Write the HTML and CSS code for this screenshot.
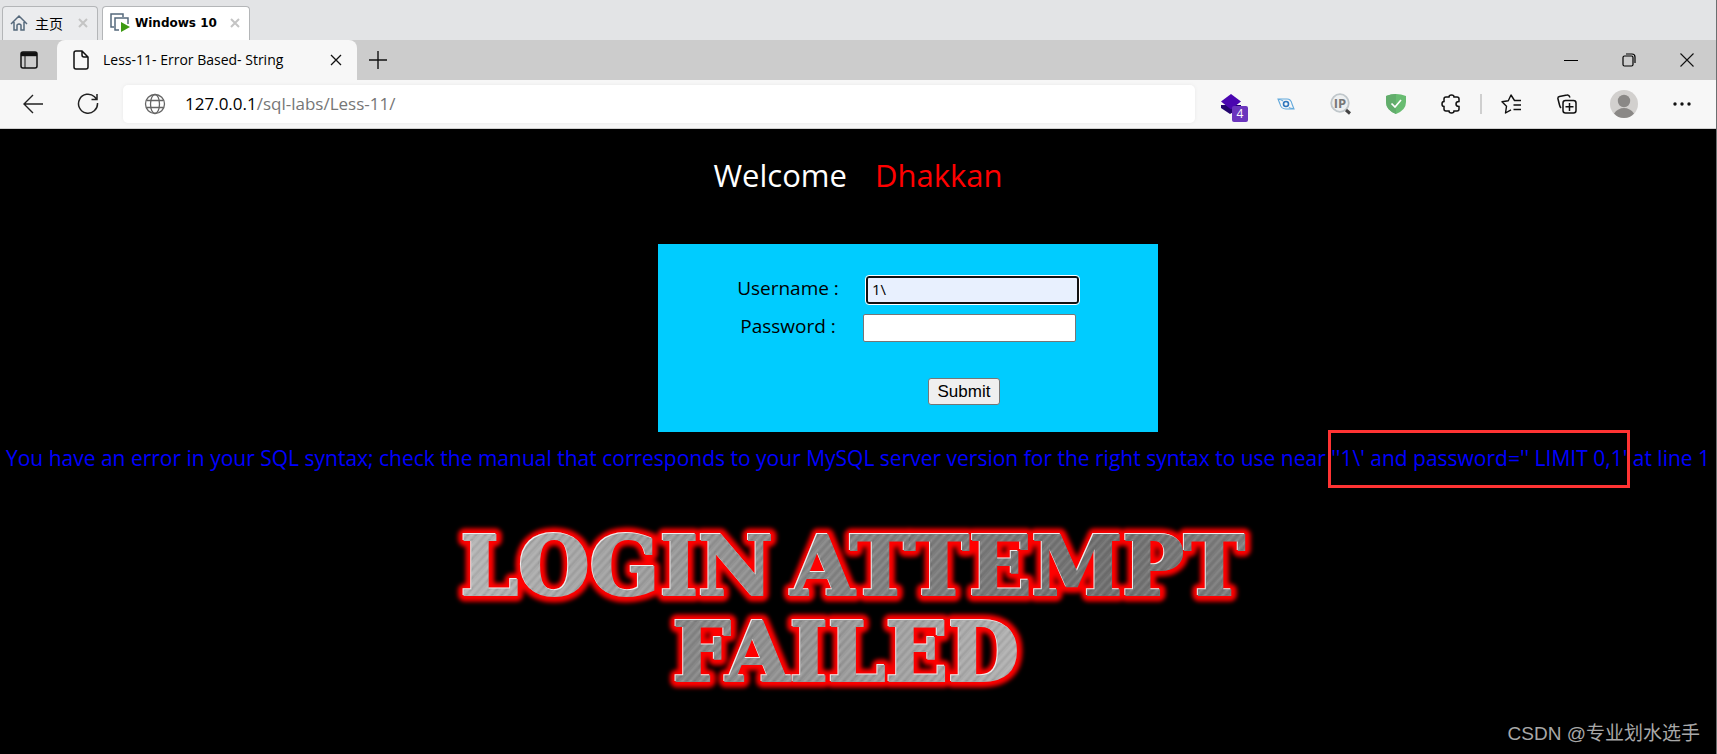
FILE: index.html
```html
<!DOCTYPE html>
<html lang="en">
<head>
  <meta charset="UTF-8" />
  <meta name="viewport" content="width=device-width, initial-scale=1.0"/>
  <title>Less-11- Error Based- String</title>
  <link rel="stylesheet" href="styles.css">
</head>
<body>

  <!-- Virtual machine tabs -->
  <div class="vm-tabs">
    <div class="vm-tab">
      <svg width="18" height="18" viewBox="0 0 18 18" fill="none" stroke="#56697c" stroke-width="1.5"><path d="M1 10 9 2l8 8M4 8v8h3v-5q2-2 4 0v5h3V8"/></svg>
      <span class="vm-name">主页</span>
      <button class="vm-close" aria-label="Close"><svg width="10" height="10" viewBox="0 0 10 10"><path d="M1 1l8 8M9 1l-8 8"/></svg></button>
    </div>
    <div class="vm-tab vm-active">
      <svg width="20" height="20" viewBox="0 0 20 20" fill="none" stroke="#56697c" stroke-width="1.5"><path d="M4 14H1V1h12v3"/><path d="M9 17H5V5h13v6"/><path d="M11 9v10l9-5z" fill="#3c9a12" stroke="none"/></svg>
      <span class="vm-name">Windows 10</span>
      <button class="vm-close" aria-label="Close"><svg width="10" height="10" viewBox="0 0 10 10"><path d="M1 1l8 8M9 1l-8 8"/></svg></button>
    </div>
  </div>

  <!-- Browser tab strip -->
  <div class="tab-strip">
    <button class="tab-menu icon-btn" aria-label="Tab actions"><svg width="18" height="18" viewBox="0 0 18 18" fill="none" stroke="#111" stroke-width="1.5"><rect x="1" y="1" width="16" height="16" rx="2"/><path d="M1 3.2h16" stroke-width="4"/><path d="M5 5v12" stroke-width="1"/></svg></button>
    <div class="tab">
      <svg width="16" height="20" viewBox="0 0 16 20" fill="none" stroke="#111" stroke-width="1.5"><path d="M3 1h6l6 6v10q0 2-2 2H3q-2 0-2-2V3q0-2 2-2zM9 1v4q0 2 2 2h4"/></svg>
      <span class="tab-title">Less-11- Error Based- String</span>
      <button class="icon-btn" aria-label="Close tab"><svg width="12" height="12" viewBox="0 0 12 12" stroke="#111" stroke-width="1.3"><path d="M1 1l10 10M11 1 1 11"/></svg></button>
    </div>
    <button class="new-tab icon-btn" aria-label="New tab"><svg width="18" height="18" viewBox="0 0 18 18" stroke="#111" stroke-width="1.4"><path d="M9 0v18M0 9h18"/></svg></button>
    <div class="window-buttons">
      <button class="icon-btn" aria-label="Minimize"><svg width="14" height="14" viewBox="0 0 14 14" stroke="#000"><path d="M0 7.500h14"/></svg></button>
      <button class="icon-btn" aria-label="Restore"><svg width="14" height="14" viewBox="0 0 14 14" fill="none" stroke="#000" stroke-width="1.2"><rect x="1" y="3" width="10" height="10" rx="1.5"/><path d="M4 1h6q3 0 3 3v6"/></svg></button>
      <button class="icon-btn" aria-label="Close"><svg width="14" height="14" viewBox="0 0 14 14" stroke="#111" stroke-width="1.1"><path d="M.5.5l13 13M13.500.5l-13 13"/></svg></button>
    </div>
  </div>

  <!-- Toolbar -->
  <div class="toolbar">
    <button class="nav icon-btn" aria-label="Back"><svg width="20" height="20" viewBox="0 0 20 20" fill="none" stroke="#222" stroke-width="1.4"><path d="M20 10H1M10 1l-9 9 9 9"/></svg></button>
    <button class="nav icon-btn" aria-label="Refresh"><svg width="22" height="22" viewBox="0 0 22 22" fill="none" stroke="#222" stroke-width="1.5"><path d="M20.500 10a9.500 9.500 0 1 1-3-6.300l2 2.300M20 1v5.500h-5.500"/></svg></button>
    <div class="address">
      <svg width="22" height="22" viewBox="0 0 22 22" fill="none" stroke="#666" stroke-width="1.3"><circle cx="11" cy="11" r="9.500"/><ellipse cx="11" cy="11" rx="4.500" ry="9.500"/><path d="M2.500 7.500h17M2.500 14.500h17"/></svg>
      <span class="url"><b>127.0.0.1</b>/sql-labs/Less-11/</span>
    </div>
    <div class="extensions">
      <button class="icon-btn ext" aria-label="Layers">
        <svg width="20" height="20" viewBox="0 0 20 20"><path d="M0 11v3l9 6 11-6v-3z" fill="#23046e"/><path d="M10 0l10 7.500-10 8L0 7.500z" fill="#4a06b0"/></svg>
        <span class="badge">4</span>
      </button>
      <button class="icon-btn ext" aria-label="Eye"><svg width="18" height="14" viewBox="0 0 18 14" fill="none" stroke="#63a9dc" stroke-width="1.1"><path d="M1 2h9q4 0 5 5l2 5H9Q4 12 3 7z"/><path d="M2 2.500q2 0 4 1.500M16 11.500q-3 0-4-1"/><circle cx="9" cy="7" r="2.500" stroke="#2e76bd" stroke-width="1.6"/></svg></button>
      <button class="icon-btn ext" aria-label="IP lookup"><svg width="22" height="22" viewBox="0 0 22 22"><circle cx="10" cy="10" r="8.800" fill="#eef0f1" stroke="#c0c7cb" stroke-width="1.8"/><path d="M16 17l4 3.500" stroke="#444" stroke-width="3"/><text x="10" y="15" text-anchor="middle" class="ip-text">IP</text></svg></button>
      <button class="icon-btn ext" aria-label="AdGuard"><svg width="20" height="20" viewBox="0 0 20 20"><path d="M10 0q5 0 10 2v6q0 8-10 12Q0 16 0 8V2q5-2 10-2z" fill="#68bc71"/><path d="M10 0v20Q0 16 0 8V2q5-2 10-2z" fill="#62ad6c"/><path d="M5.500 9.500l3.500 3.500 6-7" fill="none" stroke="#fff" stroke-width="1.7"/></svg></button>
      <button class="icon-btn ext" aria-label="Extensions"><svg width="20" height="20" viewBox="0 0 20 20" fill="none" stroke="#111" stroke-width="1.5"><path d="M5 3h3q0-2 2.500-2T13 3h3q2 0 2 2v2.500q-3 0-3 2.500t3 2.500V15q0 2-2 2h-3q0 2-2.500 2T8 17H5q-2 0-2-2v-2.500q-2 0-2-2.500t2-2.500V5q0-2 2-2z"/></svg></button>
      <span class="divider"></span>
      <button class="icon-btn ext" aria-label="Favorites"><svg width="21" height="20" viewBox="0 0 21 20" fill="none" stroke="#111" stroke-width="1.4" stroke-linejoin="round"><path d="M20 6.500h-6.500L10 1 7.300 6.800 1 7.800l4.500 4.500L4.500 19 10 15.800M12.500 11H20M12.500 15.500H20"/></svg></button>
      <button class="icon-btn ext" aria-label="Collections"><svg width="20" height="20" viewBox="0 0 20 20" fill="none" stroke="#111" stroke-width="1.5"><rect x="6" y="6.500" width="13" height="12.500" rx="2.500"/><path d="M12.500 9v8M8.500 12.800h8M4 14q-1-1-1.500-3L1 5q-.5-2 1.500-2.500L10 1q2-.5 3 2.500"/></svg></button>
      <button class="icon-btn ext profile" aria-label="Profile"><svg width="28" height="28" viewBox="0 0 28 28"><circle cx="14" cy="14" r="14" fill="#d2d0ce"/><circle cx="14" cy="11" r="6.200" fill="#8a8886"/><path d="M4 23.500Q8 18 14 18t10 5.500Q20 28 14 28T4 23.500z" fill="#8a8886"/></svg></button>
      <button class="icon-btn ext" aria-label="Settings"><svg width="18" height="4" viewBox="0 0 18 4" fill="#111"><circle cx="2" cy="2" r="1.700"/><circle cx="9" cy="2" r="1.700"/><circle cx="16" cy="2" r="1.700"/></svg></button>
    </div>
  </div>

  <!-- Page -->
  <main class="page">
    <h1 class="welcome">Welcome <span class="name">Dhakkan</span></h1>

    <form class="login">
      <div class="row">
        <label for="uname">Username :</label>
        <input class="field focused" type="text" id="uname" name="uname" value="1\">
      </div>
      <div class="row">
        <label for="passwd">Password :</label>
        <input class="field" type="password" id="passwd" name="passwd">
      </div>
      <button class="submit" type="submit">Submit</button>
    </form>

    <p class="error">You have an error in your SQL syntax; check the manual that corresponds to your MySQL server version for the right syntax to use near <span class="boxed">''1\' and password='' LIMIT 0,1'</span> at line 1</p>

    <svg class="failed" width="840" height="200" viewBox="0 0 840 200">
      <defs>
        <linearGradient id="metal" gradientUnits="userSpaceOnUse" x1="0" y1="0" x2="840" y2="0">
          <stop offset="0" stop-color="#b8b8b8"/>
          <stop offset=".3" stop-color="#989898"/>
          <stop offset=".45" stop-color="#868686"/>
          <stop offset=".8" stop-color="#707070"/>
          <stop offset="1" stop-color="#828282"/>
        </linearGradient>
        <linearGradient id="metal2" gradientUnits="userSpaceOnUse" x1="240" y1="0" x2="600" y2="0">
          <stop offset="0" stop-color="#858585"/>
          <stop offset="1" stop-color="#b4b4b4"/>
        </linearGradient>
        <pattern id="brush" width="13" height="13" patternUnits="userSpaceOnUse" patternTransform="rotate(-48)">
          <path d="M0 1h13M0 8h13" stroke="#fff" stroke-opacity=".14"/>
          <path d="M0 4h13M0 11h13" stroke="#000" stroke-opacity=".1"/>
        </pattern>
        <filter id="glow" x="-5%" y="-15%" width="110%" height="130%"><feGaussianBlur stdDeviation="2"/></filter>
      </defs>
      <g class="art" text-anchor="middle">
        <g class="art-glow" filter="url(#glow)"><text x="179" y="82">LOGIN</text><text x="580" y="82">ATTEMPT</text><text x="408" y="168">FAILED</text></g>
        <g class="art-light"><text x="178" y="81">LOGIN</text><text x="579" y="81">ATTEMPT</text><text x="407" y="167">FAILED</text></g>
        <g fill="url(#metal)" stroke="url(#metal)"><text x="179" y="82">LOGIN</text><text x="580" y="82">ATTEMPT</text></g>
        <g fill="url(#metal2)" stroke="url(#metal2)"><text x="408" y="168">FAILED</text></g>
        <g fill="url(#brush)" stroke="url(#brush)"><text x="179" y="82">LOGIN</text><text x="580" y="82">ATTEMPT</text><text x="408" y="168">FAILED</text></g>
      </g>
    </svg>

    <div class="watermark">CSDN @专业划水选手</div>
  </main>

</body>
</html>
```
FILE: styles.css
```css
* {
  box-sizing: border-box;
}

body {
  margin: 0;
  min-height: 100vh;
  display: flex;
  flex-direction: column;
  background: #000;
  font-family: "Open Sans", "Noto Sans CJK SC", sans-serif;
  border-right: 1px solid #6b6f70;
}

svg {
  display: block;
  flex: none;
}

button {
  font-family: inherit;
  cursor: pointer;
}

.icon-btn,
.vm-close {
  display: flex;
  align-items: center;
  justify-content: center;
  padding: 0;
  border: none;
  background: none;
}

/* virtual machine tabs */
.vm-tabs {
  display: flex;
  gap: 4px;
  height: 40px;
  padding: 6px 2px 0;
  background: #e3e4e6;
}

.vm-tab {
  display: flex;
  align-items: center;
  gap: 7px;
  padding: 0 9px 2px 7px;
  border: 1px solid #b4b6b8;
  border-bottom: none;
  border-radius: 4px 4px 0 0;
  background: #ebecee;
  font-size: 14px;
}

.vm-active {
  background: #fff;
  gap: 5px;
  font-family: "DejaVu Sans", sans-serif;
  font-size: 12px;
  font-weight: bold;
}

.vm-close {
  margin-left: 8px;
  stroke: #c4c4c4;
  stroke-width: 2;
}

/* browser tab strip */
.tab-strip {
  display: flex;
  height: 40px;
  background: #ccc;
}

.tab-menu {
  width: 57px;
}

.tab {
  display: flex;
  align-items: center;
  width: 300px;
  padding: 0 10px 0 16px;
  border-radius: 8px 8px 0 0;
  background: #f7f7f7;
}

.tab-title {
  flex: 1;
  margin-left: 14px;
  padding-bottom: 2px;
  font-size: 14px;
}

.tab .icon-btn {
  width: 22px;
  height: 22px;
}

.new-tab {
  width: 42px;
}

.window-buttons {
  display: flex;
  margin-left: auto;
}

.window-buttons .icon-btn {
  width: 58px;
}

/* toolbar */
.toolbar {
  display: flex;
  align-items: center;
  height: 49px;
  padding-left: 5px;
  border-bottom: 1px solid #cfcfcf;
  background: #f7f7f7;
}

.nav {
  width: 55px;
  height: 40px;
}

.address {
  flex: 1;
  display: flex;
  align-items: center;
  gap: 19px;
  height: 38px;
  margin-left: 8px;
  padding-left: 21px;
  border-radius: 5px;
  background: #fff;
  box-shadow: 0 0 4px rgba(0, 0, 0, 0.06);
}

.url {
  padding-bottom: 2px;
  color: #767676;
  font-size: 17px;
}

.url b {
  color: #000;
  font-weight: normal;
}

.extensions {
  display: flex;
  align-items: center;
  padding: 0 7px 0 8px;
}

.ext {
  position: relative;
  width: 55px;
  height: 40px;
}

.profile {
  width: 60px;
}

.badge {
  position: absolute;
  left: 29px;
  top: 22px;
  width: 16px;
  border-radius: 2px;
  background: #6b35bd;
  color: #fff;
  font-size: 12px;
  line-height: 16px;
}

.ip-text {
  font: bold 13px "Open Sans", sans-serif;
  fill: #777;
}

.divider {
  width: 2px;
  height: 20px;
  margin: 0 2px;
  background: #cfcfcf;
}

/* page */
.page {
  flex: 1;
  display: flex;
  flex-direction: column;
  align-items: center;
}

.welcome {
  display: flex;
  gap: 28px;
  margin: 22px 0 0;
  color: #fff;
  font-size: 31px;
  font-weight: normal;
  line-height: 48px;
}

.name {
  color: #f00;
}

.login {
  display: flex;
  flex-direction: column;
  align-items: center;
  gap: 10px;
  width: 500px;
  margin: 45px 0 0 100px;
  padding: 32px 0 27px;
  background: #0cf;
  font-size: 19px;
}

.row {
  display: flex;
  align-items: center;
  gap: 27px;
  height: 28px;
}

.row label {
  padding-bottom: 4px;
}

.field {
  width: 213px;
  height: 28px;
  padding: 0 4px 2px;
  border: 1px solid #767676;
  border-radius: 2px;
  background: #fff;
  font-family: "Open Sans", sans-serif;
  font-size: 15px;
}

.focused {
  border: 2px solid #101010;
  border-radius: 3px;
  outline: 1px solid #fff;
  background: #e8f0fe;
}

.submit {
  height: 27px;
  margin: 26px 0 0 112px;
  padding: 0 9px;
  border: 1px solid #767676;
  border-radius: 3px;
  background: #efefef;
  font-family: "Liberation Sans", sans-serif;
  font-size: 17px;
}

.error {
  margin: 11px 0 0;
  color: #00f;
  font-size: 21px;
  line-height: 30px;
  white-space: nowrap;
}

.boxed {
  position: relative;
}

.boxed::after {
  content: "";
  position: absolute;
  inset: -14px -3px -16px;
  border: 3px solid #ff3333;
}

.failed {
  margin-top: 40px;
}

.art {
  font-family: "DejaVu Serif", serif;
  font-size: 82px;
  font-weight: bold;
  stroke-width: 2px;
}

.art-glow {
  fill: #f00;
  stroke: #f00;
  stroke-width: 13px;
  stroke-linejoin: round;
}

.art-light {
  fill: #eee;
  stroke: #eee;
}

.watermark {
  align-self: flex-end;
  margin: auto 16px 7px 0;
  color: #a8a8a8;
  font-family: "Liberation Sans", "Noto Sans CJK SC", sans-serif;
  font-size: 19px;
  line-height: 26px;
}
```
